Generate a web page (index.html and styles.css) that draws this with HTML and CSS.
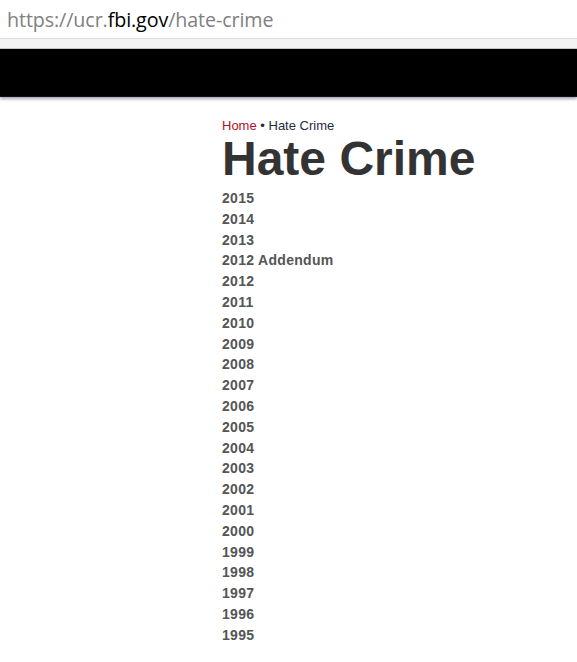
FILE: index.html
```html
<!DOCTYPE html>
<html lang="en">
<head>
<meta charset="utf-8">
<title>Hate Crime</title>
<link rel="stylesheet" href="styles.css">
</head>
<body>
<div class="urlbar"><span class="dim">https://ucr.</span><span class="host">fbi.gov</span><span class="dim">/hate-crime</span></div>
<div class="strip"></div>
<header class="topbar"></header>
<main class="content">
  <nav class="crumbs"><a class="home" href="#">Home</a> <span class="sep">•</span> <span class="current">Hate Crime</span></nav>
  <h1 class="title">Hate Crime</h1>
  <ul class="years">
    <li><a href="#">2015</a></li>
    <li><a href="#">2014</a></li>
    <li><a href="#">2013</a></li>
    <li><a href="#">2012 Addendum</a></li>
    <li><a href="#">2012</a></li>
    <li><a href="#">2011</a></li>
    <li><a href="#">2010</a></li>
    <li><a href="#">2009</a></li>
    <li><a href="#">2008</a></li>
    <li><a href="#">2007</a></li>
    <li><a href="#">2006</a></li>
    <li><a href="#">2005</a></li>
    <li><a href="#">2004</a></li>
    <li><a href="#">2003</a></li>
    <li><a href="#">2002</a></li>
    <li><a href="#">2001</a></li>
    <li><a href="#">2000</a></li>
    <li><a href="#">1999</a></li>
    <li><a href="#">1998</a></li>
    <li><a href="#">1997</a></li>
    <li><a href="#">1996</a></li>
    <li><a href="#">1995</a></li>
  </ul>
</main>
</body>
</html>
```
FILE: styles.css
```css
html, body {
  margin: 0;
  padding: 0;
  background: #fff;
}
body {
  font-family: "Liberation Sans", Arial, sans-serif;
  overflow: hidden;
}
.urlbar {
  height: 38px;
  padding-left: 7px;
  font-family: "Open Sans", "Noto Sans", sans-serif;
  font-size: 19.7px;
  line-height: 39px;
  letter-spacing: -0.1px;
  color: #808080;
  white-space: nowrap;
}
.urlbar .host {
  color: #000;
}
.strip {
  height: 9px;
  background: #f3f3f3;
  border-top: 1px solid #dedede;
  border-bottom: 1px solid #c8c8c8;
}
.topbar {
  height: 47px;
  background: #000;
  border-bottom: 1px solid #0e1220;
  box-shadow: 0 2px 3px rgba(0, 0, 0, 0.35);
}
.content {
  padding-left: 222px;
  padding-top: 21px;
}
.crumbs {
  font-size: 13px;
  line-height: 16px;
  color: #1f2a44;
}
.crumbs a {
  text-decoration: none;
}
.crumbs .home {
  color: #b30f23;
}
.title {
  margin: 0 0 4px;
  font-size: 48px;
  line-height: 50px;
  font-weight: bold;
  color: #333;
}
.years {
  list-style: none;
  margin: 0;
  padding: 0;
  font-size: 14px;
  line-height: 20.8px;
  font-weight: bold;
  letter-spacing: 0.3px;
}
.years a {
  color: #555;
  text-decoration: none;
}
```
